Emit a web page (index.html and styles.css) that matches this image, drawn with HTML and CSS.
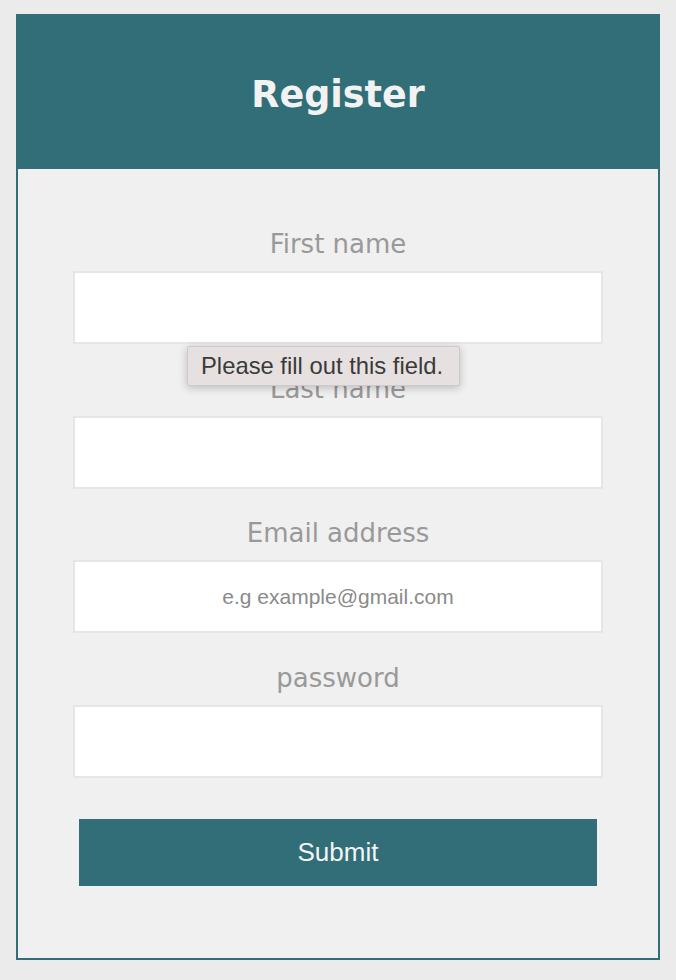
FILE: index.html
```html
<!DOCTYPE html>
<html lang="en">
<head>
<meta charset="utf-8">
<title>Register</title>
<link rel="stylesheet" href="styles.css">
</head>
<body>
<div class="card">
  <header class="card-header">
    <h1 class="title">Register</h1>
  </header>
  <form class="form">
    <div class="field">
      <label class="label" for="first">First name</label>
      <input class="input" id="first" type="text">
      <div class="tooltip">Please fill out this field.</div>
    </div>
    <div class="field">
      <label class="label" for="last">Last name</label>
      <input class="input" id="last" type="text">
    </div>
    <div class="field">
      <label class="label" for="email">Email address</label>
      <input class="input" id="email" type="email" placeholder="e.g example@gmail.com">
    </div>
    <div class="field">
      <label class="label" for="pw">password</label>
      <input class="input" id="pw" type="password">
    </div>
    <button class="submit" type="button">Submit</button>
  </form>
</div>
</body>
</html>
```
FILE: styles.css
```css
html, body {
  margin: 0;
  padding: 0;
  background: #ebebeb;
}
body {
  padding: 14px 16px 20px;
  font-family: "DejaVu Sans", Verdana, sans-serif;
}
.card {
  border: 2px solid #316e78;
  background: #f0f0f0;
  display: flex;
  flex-direction: column;
}
.card-header {
  background: #316e78;
  height: 153px;
  display: flex;
  align-items: center;
  justify-content: center;
}
.title {
  margin: 0;
  color: #f2f2f2;
  font-family: "DejaVu Sans", Verdana, sans-serif;
  font-weight: bold;
  font-size: 36.5px;
  line-height: 44px;
  padding-top: 4px;
}
.form {
  display: flex;
  flex-direction: column;
  align-items: center;
  padding: 60px 55px 72px;
  gap: 29.7px;
}
.field {
  position: relative;
  width: 100%;
  display: flex;
  flex-direction: column;
  align-items: center;
  gap: 12px;
}
.label {
  color: #999999;
  font-size: 26px;
  line-height: 30px;
  height: 30px;
}
.input {
  box-sizing: border-box;
  width: 100%;
  height: 73px;
  margin: 0;
  border: 2px solid #e6e6e6;
  background: #ffffff;
  outline: none;
  text-align: center;
  font-family: "Liberation Sans", Arial, sans-serif;
  font-size: 21px;
  color: #333;
}
.input::placeholder {
  color: #8a8a8a;
}
.tooltip {
  position: absolute;
  left: 114px;
  top: 117px;
  box-sizing: border-box;
  height: 40px;
  padding: 0 16px 0 13px;
  display: flex;
  align-items: center;
  background: #e6e1e0;
  border: 1px solid #cfcac9;
  border-radius: 2px;
  box-shadow: 0 2px 8px rgba(0, 0, 0, 0.22);
  color: #3a3a3a;
  font-family: "Liberation Sans", Arial, sans-serif;
  font-size: 23.8px;
  white-space: nowrap;
  z-index: 2;
}
.submit {
  margin-top: 11.3px;
  width: 518px;
  height: 67px;
  border: none;
  background: #316e78;
  color: #f4f4f4;
  font-family: "Liberation Sans", Arial, sans-serif;
  font-size: 26px;
  padding: 0;
  cursor: pointer;
}
```
